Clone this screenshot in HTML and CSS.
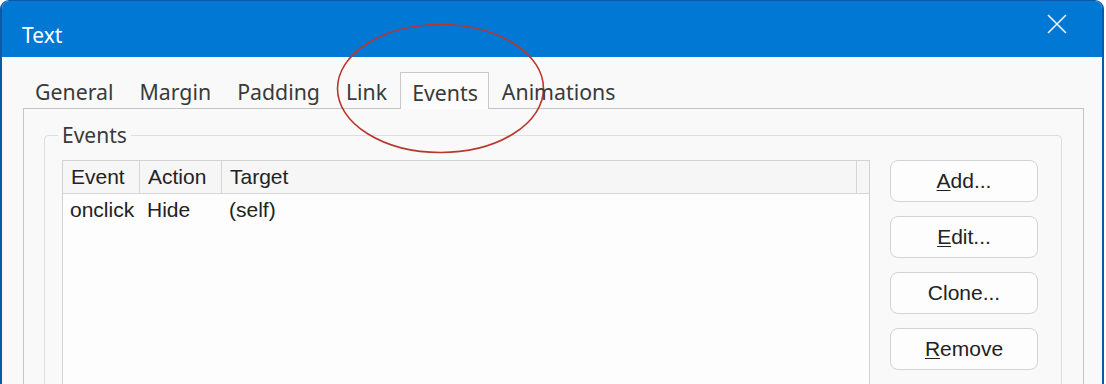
FILE: index.html
```html
<!DOCTYPE html>
<html>
<head>
<meta charset="utf-8">
<title>Text</title>
<link rel="stylesheet" href="styles.css">
</head>
<body>
<div class="window">
  <div class="titlebar">
    <span class="title">Text</span>
    <svg class="close" width="22" height="22" viewBox="0 0 22 22"><path d="M2 2 L20 20 M20 2 L2 20" stroke="#fff" stroke-width="1.5" fill="none"/></svg>
  </div>
  <div class="content">
    <div class="tabs">
      <div class="tab">General</div>
      <div class="tab">Margin</div>
      <div class="tab">Padding</div>
      <div class="tab">Link</div>
      <div class="tab active">Events</div>
      <div class="tab">Animations</div>
    </div>
    <div class="panel">
      <fieldset class="group">
        <legend class="legend">Events</legend>
        <div class="group-body">
          <div class="list">
            <div class="list-head">
              <div class="col c1">Event</div>
              <div class="col c2">Action</div>
              <div class="col c3">Target</div>
              <div class="col filler"></div>
            </div>
            <div class="list-row">
              <div class="cell c1">onclick</div>
              <div class="cell c2">Hide</div>
              <div class="cell c3">(self)</div>
            </div>
          </div>
          <div class="buttons">
            <div class="btn"><u>A</u>dd...</div>
            <div class="btn"><u>E</u>dit...</div>
            <div class="btn">Clone...</div>
            <div class="btn"><u>R</u>emove</div>
            <div class="btn">&nbsp;</div>
          </div>
        </div>
      </fieldset>
    </div>
  </div>
</div>
<svg class="annotation" width="1106" height="384" viewBox="0 0 1106 384"><ellipse cx="440.5" cy="88.5" rx="103" ry="64" fill="none" stroke="#b8372b" stroke-width="1.6"/></svg>
</body>
</html>
```
FILE: styles.css
```css
html, body {
  margin: 0;
  padding: 0;
  background: #ffffff;
  width: 1106px;
  height: 384px;
  overflow: hidden;
  position: relative;
}

.window {
  box-sizing: border-box;
  width: 1104px;
  height: 420px;
  border: 2px solid #0b5aa6;
  border-top-width: 1px;
  border-bottom: none;
  border-radius: 9px 9px 0 0;
  overflow: hidden;
  background: #f9f9f9;
  font-family: "Noto Sans", "Open Sans", sans-serif;
}

.titlebar {
  height: 56px;
  background: #0078d4;
  display: flex;
  align-items: center;
  justify-content: space-between;
  padding: 0 34px 0 20px;
}

.title {
  color: #ffffff;
  font-size: 21px;
  line-height: 1;
  margin-top: 13px;
}

.close {
  display: block;
  margin-top: -10px;
}

.content {
  padding: 15px 18px 0 21px;
}

.tabs {
  display: flex;
  height: 36px;
  margin-left: -1px;
  position: relative;
  z-index: 1;
}

.tab {
  box-sizing: border-box;
  height: 36px;
  padding: 0 12px;
  border: 1px solid transparent;
  border-bottom: none;
  font-size: 21.3px;
  color: #3a3a3a;
  display: flex;
  align-items: center;
  padding-top: 2px;
}

.tab.active {
  background: #fcfcfc;
  border-color: #c9c9c9;
  height: 37px;
  margin-bottom: -1px;
  padding: 2px 10px 0 11px;
}

.panel {
  border: 1px solid #c4c4c4;
  border-bottom: none;
  background: #f9f9f9;
  height: 320px;
  padding: 13px 21px 0 20px;
}

.group {
  margin: 0;
  border: 1px solid #dedede;
  border-radius: 4px;
  padding: 0 23px 0 17px;
  height: 300px;
}

.legend {
  font-size: 21px;
  color: #3a3a3a;
  padding: 0 4px;
  margin-left: -4px;
  line-height: 26px;
}

.group-body {
  display: flex;
  gap: 20px;
  margin-top: 12px;
  font-family: "Liberation Sans", Arial, sans-serif;
  font-size: 21px;
  color: #222222;
}

.list {
  flex: 1;
  border: 1px solid #d2d2d2;
  background: #fdfdfd;
  height: 260px;
}

.list-head {
  display: flex;
  height: 32px;
  background: #f6f6f6;
  border-bottom: 1px solid #d6d6d6;
}

.col {
  box-sizing: border-box;
  border-right: 1px solid #d6d6d6;
  padding-left: 8px;
  display: flex;
  align-items: center;
}

.c1 { width: 77px; }
.c2 { width: 82px; }
.c3 { width: 635px; }

.filler {
  flex: 1;
  border-right: none;
}

.list-row {
  display: flex;
  height: 32px;
}

.cell {
  box-sizing: border-box;
  padding-left: 7px;
  display: flex;
  align-items: center;
}

.buttons {
  width: 148px;
  display: flex;
  flex-direction: column;
  gap: 14px;
}

.btn {
  box-sizing: border-box;
  height: 42px;
  border: 1px solid #d3d3d3;
  border-radius: 8px;
  background: #fdfdfd;
  display: flex;
  align-items: center;
  justify-content: center;
}

.btn u {
  text-decoration-thickness: 1px;
  text-underline-offset: 2px;
}

.annotation {
  position: absolute;
  left: 0;
  top: 0;
  pointer-events: none;
}
```
